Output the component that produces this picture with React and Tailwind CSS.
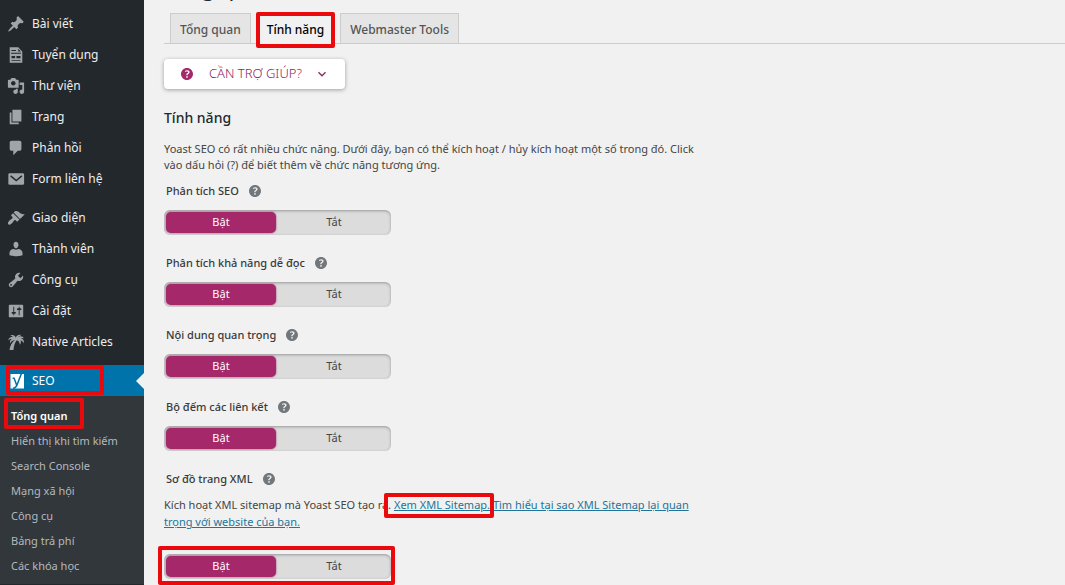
const ICONS = {
  post: (
    <path d="M10.44 3.02l1.82-1.82 6.36 6.35-1.83 1.82c-1.05-.68-2.48-.57-3.41.36l-.75.75c-.92.93-1.04 2.35-.35 3.41l-1.83 1.82-2.41-2.41-2.8 2.79c-.42.42-3.38 2.71-3.8 2.29s1.86-3.39 2.28-3.81l2.79-2.79L4.1 9.36l1.83-1.82c1.05.69 2.48.57 3.4-.36l.75-.75c.93-.92 1.05-2.35.36-3.41z" />
  ),
  document: (
    <path fillRule="evenodd" d="M3 1.500h9.500l4.500 4.500v12.500H3zM5 4.500h5v1H5zM4.500 7.500h11v1.200h-11zM5 11h4v2.500H5zM10.500 11H15v2.500H10.500zM5 15.500h10v1H5zM12.500 3v3H15.500z" />
  ),
  media: (
    <path d="M13 11V4c0-.55-.45-1-1-1h-1.67L9 1H5L3.67 3H2c-.55 0-1 .45-1 1v7c0 .55.45 1 1 1h10c.55 0 1-.45 1-1zM7 4.5c1.38 0 2.5 1.12 2.5 2.5S8.38 9.5 7 9.5 4.5 8.38 4.5 7 5.62 4.5 7 4.5zM14 6h5v10.500c0 1.380-1.120 2.500-2.500 2.500S14 17.880 14 16.500s1.120-2.500 2.500-2.500c.17 0 .34.02.5.05V9h-3V6zm-4 8.050V13h2v3.500c0 1.380-1.120 2.500-2.500 2.500S7 17.880 7 16.500 8.120 14 9.500 14c.17 0 .34.02.5.05z" />
  ),
  page: <path d="M6 15V2h10v13H6zm-1 1h8v2H3V5h2v11z" />,
  comments: (
    <path d="M5 2h9c1.1 0 2 .9 2 2v7c0 1.100-.9 2-2 2h-2l-5 5v-5H5c-1.100 0-2-.9-2-2V4c0-1.100.9-2 2-2z" />
  ),
  email: (
    <>
      <rect x="1.500" y="3.500" width="17.500" height="13" rx="1.500" />
      <path d="M4 6.500l6.250 5.200L16.500 6.500" fill="none" stroke="#23282d" strokeWidth="1.600" />
    </>
  ),
  appearance: (
    <path d="M14.48 11.06L7.41 3.99l1.5-1.5c.5-.56 2.3-.47 3.51.32 1.21.8 1.43 1.28 2.91 2.1 1.18.64 2.45 1.26 4.45.85zm-.71.71L6.7 4.7 4.93 6.47c-.39.39-.39 1.02 0 1.41l1.06 1.06c.39.39.39 1.03 0 1.42-.6.6-1.43 1.11-2.21 1.69-.35.26-.7.53-1.01.84C1.43 14.23.4 16.08 1.4 17.07c.99 1 2.84-.03 4.18-1.36.31-.31.58-.66.85-1.02.57-.78 1.08-1.61 1.69-2.21.39-.39 1.02-.39 1.41 0l1.06 1.06c.39.39 1.02.39 1.41 0z" />
  ),
  users: (
    <path d="M10 9.25c-2.27 0-2.73-3.44-2.73-3.44C7 4.02 7.82 2 9.97 2c2.16 0 2.98 2.02 2.71 3.81 0 0-.41 3.44-2.68 3.44zm0 1.500L12.72 10c2.39 0 4.52 2.33 4.52 4.53v2.49s-3.65 1.13-7.24 1.13c-3.65 0-7.24-1.13-7.24-1.13v-2.49c0-2.25 1.94-4.48 4.47-4.48z" />
  ),
  tools: (
    <path d="M16.68 9.77c-1.34 1.34-3.3 1.67-4.95.99l-5.41 6.52c-.99.99-2.59.99-3.58 0s-.99-2.59 0-3.57l6.52-5.42c-.68-1.65-.35-3.61.99-4.95 1.28-1.28 3.12-1.62 4.72-1.06l-2.89 2.89 2.82 2.82 2.86-2.87c.53 1.58.18 3.39-1.08 4.65zM3.81 16.21c.4.39 1.04.39 1.43 0 .4-.4.4-1.04 0-1.43-.39-.4-1.03-.4-1.43 0-.39.39-.39 1.03 0 1.43z" />
  ),
  settings: (
    <path d="M18 16V4c0-.55-.45-1-1-1H3c-.55 0-1 .45-1 1v12c0 .55.45 1 1 1h14c.55 0 1-.45 1-1zM8 11h1c.55 0 1 .45 1 1s-.45 1-1 1H8v1.5c0 .28-.22.5-.5.5s-.5-.22-.5-.5V13H6c-.55 0-1-.45-1-1s.45-1 1-1h1V5.500c0-.28.22-.5.5-.5s.5.22.5.5V11zm5-2h-1c-.55 0-1-.45-1-1s.45-1 1-1h1V5.500c0-.28.22-.5.5-.5s.5.22.5.5V7h1c.55 0 1 .45 1 1s-.45 1-1 1h-1v5.500c0 .28-.22.5-.5.5s-.5-.22-.5-.5V9z" />
  ),
  palm: (
    <path d="M9.800 5.200C9 2.600 6.400 1.600 3.600 2.800c1.400.2 2.300.6 2.900 1.300C3.900 4.100 1.700 5.600 1.200 8.300c1.500-1.200 2.700-1.600 4.200-1.500-1.700 1-2.500 2.700-2 5 1-2.300 2.500-3.700 5.100-4.100C5.300 10.800 3.200 14.500 2.800 19h4.400c.3-4.600 1.400-8.100 3.700-10.900 2.100.6 3.200 2.200 3.200 5 1.500-1.600 1.700-3.400.8-5 1.700.4 2.900 1.500 3.600 3.400.9-2.800-.2-5-2.800-5.800 1-.3 2-.2 3.200.3-1.300-2.400-4.200-3.100-6.600-1.400 1.100-1.300 2.100-1.900 3.600-2.200-2.600-.9-5.100.1-6.100 2.800z" />
  ),
};

const GROUPS = [
  [
    ["post", "Bài viết"],
    ["document", "Tuyển dụng"],
    ["media", "Thư viện"],
    ["page", "Trang"],
    ["comments", "Phản hồi"],
    ["email", "Form liên hệ"],
  ],
  [
    ["appearance", "Giao diện"],
    ["users", "Thành viên"],
    ["tools", "Công cụ"],
    ["settings", "Cài đặt"],
    ["palm", "Native Articles"],
  ],
];

const SUBMENU = [
  "Hiển thị khi tìm kiếm",
  "Search Console",
  "Mạng xã hội",
  "Công cụ",
  "Bảng trả phí",
  "Các khóa học",
];

function Highlight({ className }) {
  return (
    <span
      aria-hidden="true"
      className={`pointer-events-none absolute z-10 rounded-xs border-4 border-[#ea0a0e] ${className}`}
    />
  );
}

function YoastIcon() {
  return (
    <svg viewBox="0 0 16 18" className="h-[18px] w-4 shrink-0" aria-hidden="true">
      <path fill="#fff" d="M1.500 2H15V16.500H1.500z" />
      <path
        fill="none"
        stroke="#0073aa"
        strokeWidth="1.500"
        d="M3.600 6.200h1.500l2.600 7M13 0L8.300 12.200c-.9 2.600-2 3.900-4.300 4"
      />
    </svg>
  );
}

function HelpIcon({ className }) {
  return (
    <svg viewBox="3 3 14 14" fill="currentColor" className={className} aria-hidden="true">
      <path d="M17 10c0-3.870-3.140-7-7-7-3.870 0-7 3.130-7 7s3.130 7 7 7c3.860 0 7-3.130 7-7zm-6.300 1.480H9.140v-.43c0-.38.08-.7.24-.98s.46-.57.88-.89c.41-.29.68-.53.81-.71.14-.18.2-.39.2-.62 0-.25-.09-.44-.28-.58-.19-.13-.45-.19-.79-.19-.58 0-1.250.19-2 .57l-.64-1.280c.87-.49 1.800-.74 2.770-.74.81 0 1.450.2 1.920.58.48.39.71.91.71 1.550 0 .43-.09.8-.29 1.110-.19.32-.57.67-1.110 1.060-.38.28-.61.49-.71.63-.1.15-.15.34-.15.57v.35zm-1.470 2.740c-.18-.17-.27-.42-.27-.73 0-.33.08-.58.26-.75s.43-.25.77-.25c.32 0 .57.09.75.26s.27.42.27.74c0 .3-.09.55-.27.72-.18.18-.43.27-.75.27-.33 0-.58-.09-.76-.26z" />
    </svg>
  );
}

function MenuItem({ icon, label }) {
  return (
    <li>
      <a href="#" className="flex h-[31px] items-center gap-[7px] pl-[7px] text-xs text-[#eee]">
        <svg viewBox="0 0 20 20" fill="#a0a5aa" className="size-[18px] shrink-0" aria-hidden="true">
          {ICONS[icon]}
        </svg>
        {label}
      </a>
    </li>
  );
}

function Sidebar() {
  return (
    <nav className="w-36 shrink-0 bg-[#23282d] pt-2">
      {GROUPS.map((group) => (
        <ul key={group[0][0]} className="mb-2">
          {group.map(([icon, label]) => (
            <MenuItem key={label} icon={icon} label={label} />
          ))}
        </ul>
      ))}
      <a
        href="#"
        className="relative flex h-[31px] items-center gap-[7px] bg-[#0073aa] pl-[9px] text-xs text-white"
      >
        <YoastIcon />
        SEO
        <span className="absolute right-0 top-2 border-y-8 border-r-8 border-y-transparent border-r-[#f1f1f1]" />
        <Highlight className="bottom-px left-1.5 right-10 top-0" />
      </a>
      <ul className="bg-[#32373c] pb-[5px] text-[11px] text-[#b4b9be]">
        <li className="relative pt-2">
          <a href="#" className="flex h-[25px] items-center pl-[11px] font-semibold text-white">
            Tổng quan
          </a>
          <Highlight className="bottom-0 left-1 right-[60px] top-0.5" />
        </li>
        {SUBMENU.map((label) => (
          <li key={label}>
            <a href="#" className="flex h-[25px] items-center pl-[11px]">
              {label}
            </a>
          </li>
        ))}
      </ul>
    </nav>
  );
}

function Toggle({ name, label }) {
  const option =
    "flex cursor-pointer items-center justify-center rounded-[5px] text-[11px] text-[#444] peer-checked:bg-[#a4286a] peer-checked:text-white peer-checked:shadow-[0_0_2px_#a4286a]";
  return (
    <div
      role="radiogroup"
      aria-label={label}
      className="grid h-[25px] w-[227px] grid-cols-2 gap-[3px] rounded-md bg-[#dcdcdc] p-0.5 shadow-[inset_0_1px_3px_rgba(0,0,0,0.3)]"
    >
      <div className="grid">
        <input id={`${name}-on`} type="radio" name={name} defaultChecked className="peer sr-only" />
        <label htmlFor={`${name}-on`} className={option}>
          Bật
        </label>
      </div>
      <div className="grid">
        <input id={`${name}-off`} type="radio" name={name} className="peer sr-only" />
        <label htmlFor={`${name}-off`} className={option}>
          Tắt
        </label>
      </div>
    </div>
  );
}

function FeatureTitle({ children }) {
  return (
    <div className="flex h-4 items-center gap-2.5 pl-0.5">
      <h3 className="text-[11px] font-medium text-[#3a3a3a]">{children}</h3>
      <button type="button" aria-label={`${children} (?)`} className="text-[#72777c]">
        <HelpIcon className="size-3" />
      </button>
    </div>
  );
}

const FEATURES = [
  ["seo", "Phân tích SEO"],
  ["readability", "Phân tích khả năng dễ đọc"],
  ["cornerstone", "Nội dung quan trọng"],
  ["links", "Bộ đếm các liên kết"],
];

export default function App() {
  const tab =
    "flex h-[30px] items-center border border-b-0 border-[#ccc] px-[9px] pt-0.5 text-xs font-medium";
  return (
    <div className="flex min-h-screen bg-[#f1f1f1] font-['Noto_Sans','Open_Sans',sans-serif] text-[#444]">
      <Sidebar />
      <main className="min-w-0 flex-1 overflow-hidden pl-5">
        <h1 className="-mt-[29px] mb-2.5 text-[22px] leading-8 text-[#23282d]">Tổng quan</h1>
        <div className="flex gap-1.5 border-b border-[#ccc] pl-1.5">
          <a href="#" className={`${tab} bg-[#e5e5e5] text-[#555]`}>
            Tổng quan
          </a>
          <a href="#" className={`${tab} relative -mb-px h-[31px] bg-[#f1f1f1] text-black`}>
            Tính năng
            <Highlight className="-bottom-1 -left-0.5 -right-0.5 -top-0.5" />
          </a>
          <a href="#" className={`${tab} bg-[#e5e5e5] text-[#555]`}>
            Webmaster Tools
          </a>
        </div>

        <button
          type="button"
          className="mt-[15px] flex h-[30px] w-[181px] items-center rounded bg-white pl-[17px] text-[13px] font-light text-[#8d2560] shadow-[0_1px_4px_rgba(0,0,0,0.35)]"
        >
          <HelpIcon className="mr-4 size-3 text-[#a4286a]" />
          CẦN TRỢ GIÚP?
          <svg
            viewBox="0 0 10 10"
            fill="none"
            stroke="currentColor"
            strokeWidth="1.300"
            className="ml-[15px] size-2.5"
            aria-hidden="true"
          >
            <path d="M1.500 3.300L5 6.800l3.500-3.500" />
          </svg>
        </button>

        <h2 className="mt-[19px] text-sm leading-5 font-medium text-[#23282d]">Tính năng</h2>
        <p className="mt-[13px] max-w-[540px] text-[11px] leading-4">
          Yoast SEO có rất nhiều chức năng. Dưới đây, bạn có thể kích hoạt / hủy kích hoạt một số
          trong đó. Click vào dấu hỏi (?) để biết thêm về chức năng tương ứng.
        </p>

        <div className="mt-2.5 flex flex-col gap-5">
          {FEATURES.map(([name, label]) => (
            <section key={name} className="flex flex-col gap-[11px]">
              <FeatureTitle>{label}</FeatureTitle>
              <Toggle name={name} label={label} />
            </section>
          ))}
          <section>
            <FeatureTitle>Sơ đồ trang XML</FeatureTitle>
            <p className="mt-[9px] max-w-[540px] text-[11px] leading-[17px]">
              Kích hoạt XML sitemap mà Yoast SEO tạo ra.{" "}
              <span className="relative">
                <a href="#" className="text-[#21759b] underline">
                  Xem XML Sitemap.
                </a>
                <Highlight className="-bottom-1.5 -left-2.5 -right-1 -top-1" />
              </span>{" "}
              <a href="#" className="text-[#21759b] underline">
                Tìm hiểu tại sao XML Sitemap lại quan trọng với website của bạn.
              </a>
            </p>
            <div className="relative mt-6 w-fit">
              <Toggle name="sitemap" label="Sơ đồ trang XML" />
              <Highlight className="-bottom-1.5 -left-1.5 -right-1 -top-2" />
            </div>
          </section>
        </div>
      </main>
    </div>
  );
}
